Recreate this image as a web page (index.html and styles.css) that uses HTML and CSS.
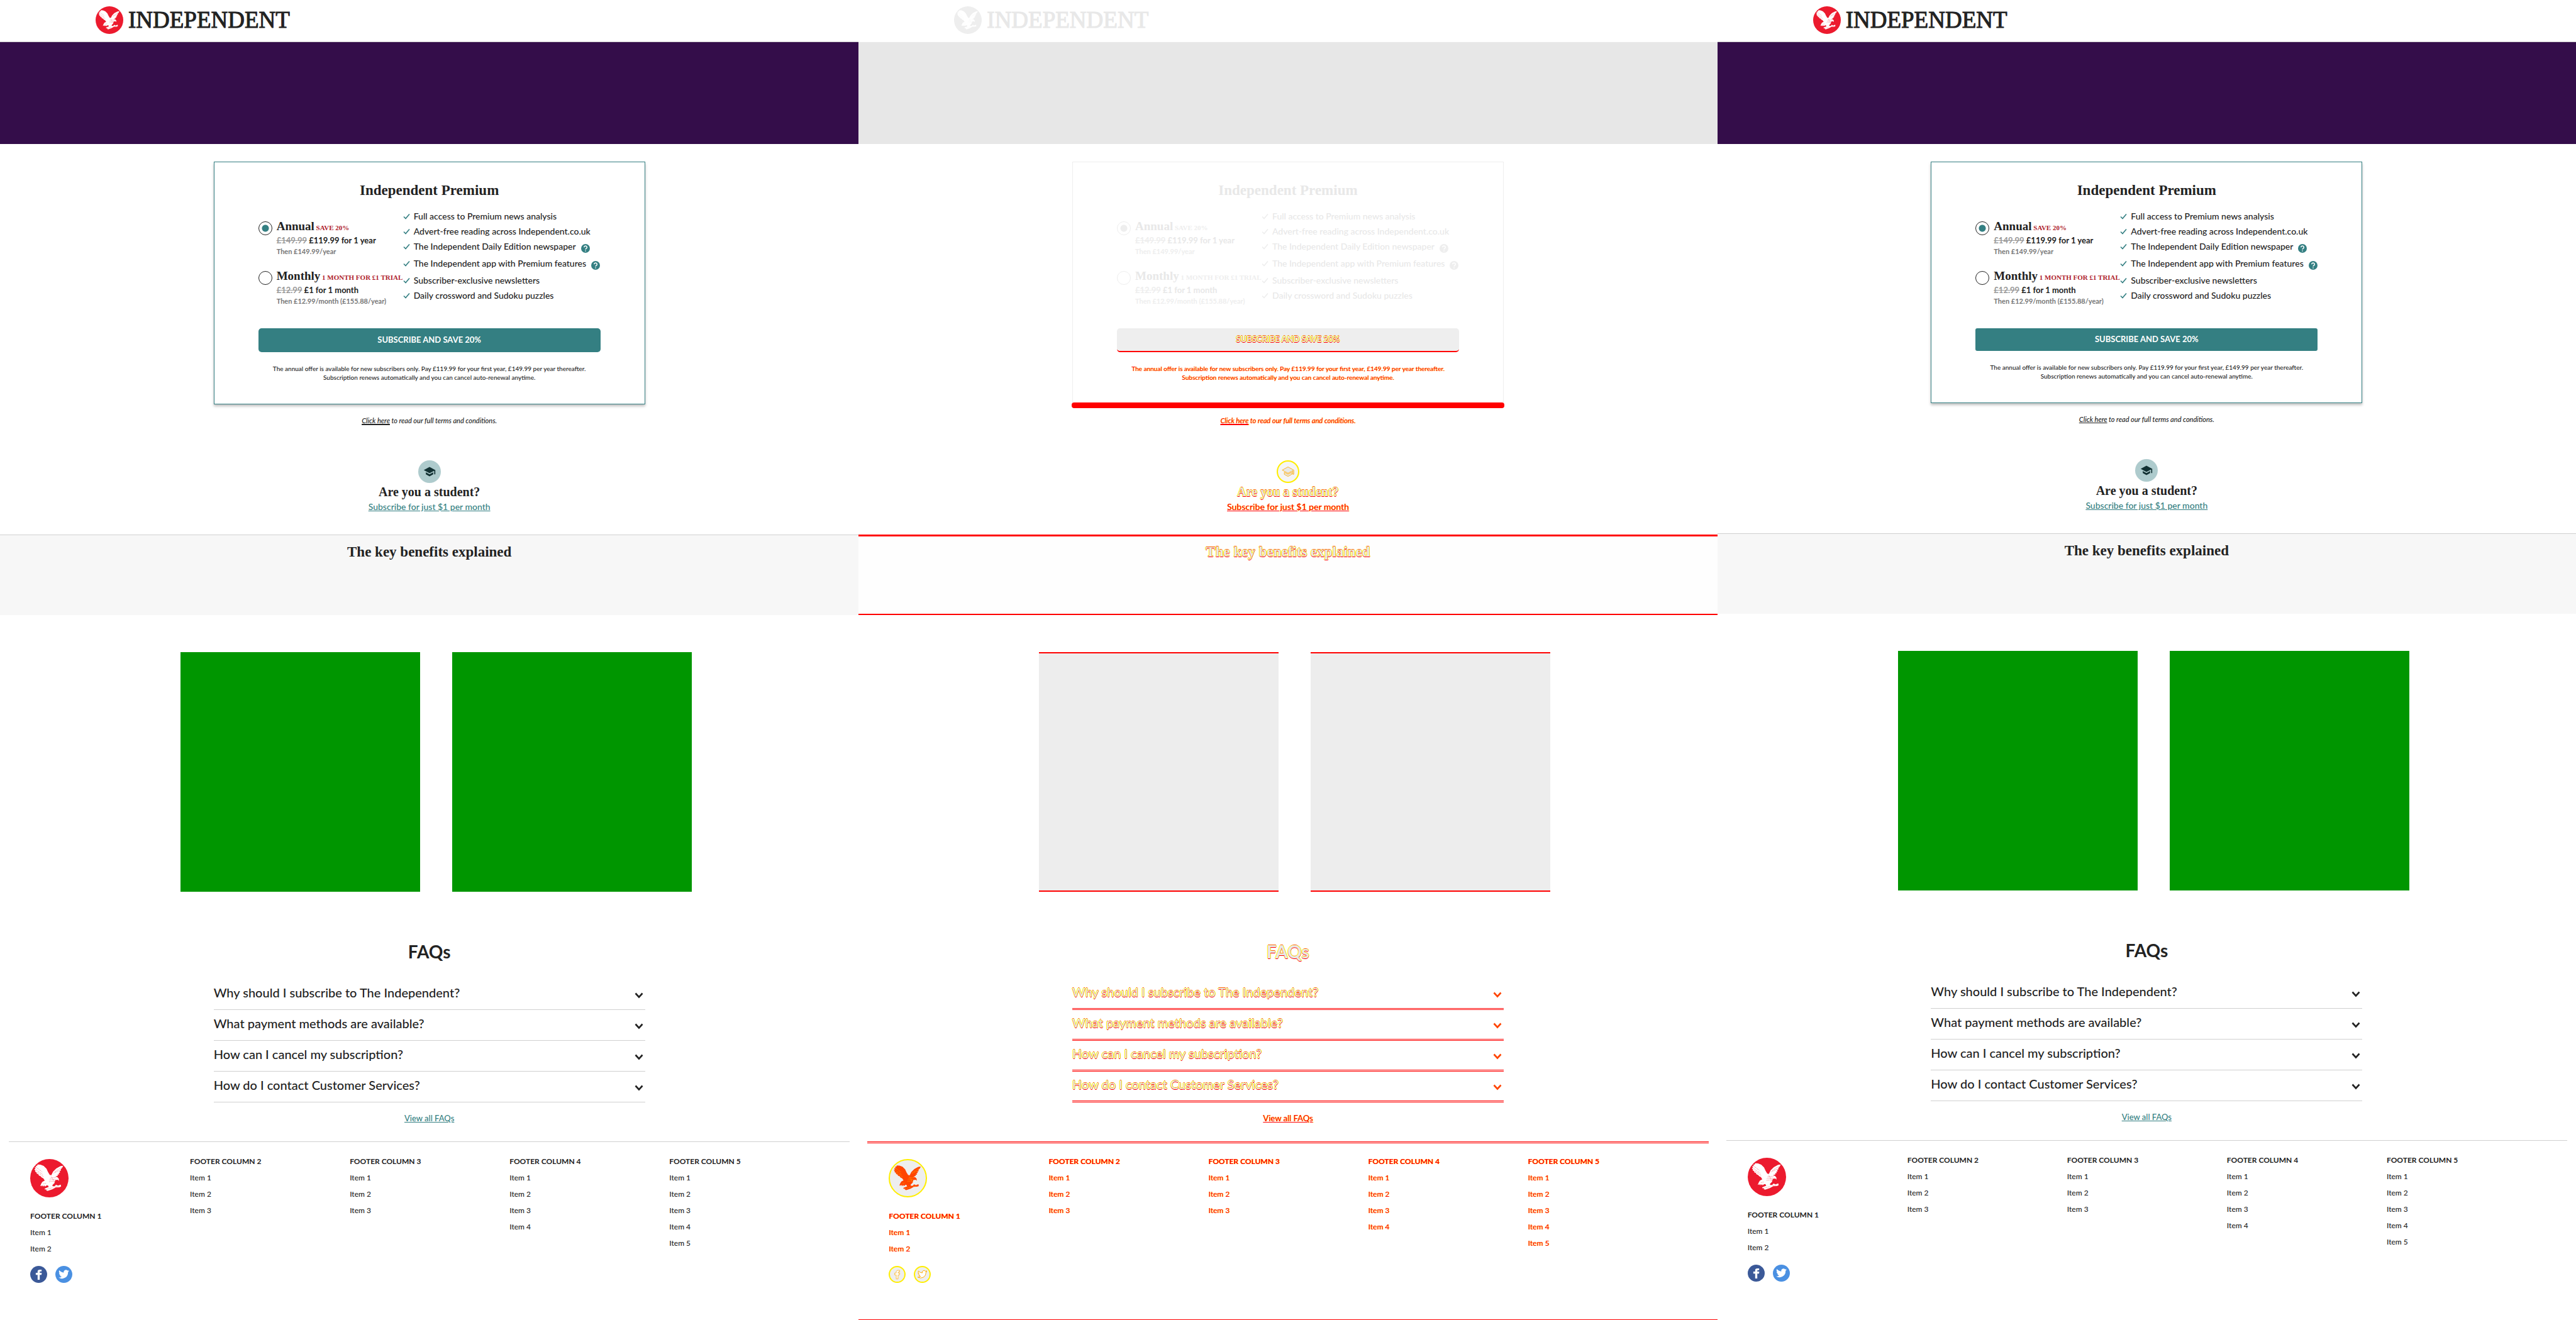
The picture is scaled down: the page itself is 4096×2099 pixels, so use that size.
FILE: index.html
```
<!DOCTYPE html>
<html lang="en">
<head>
<meta charset="utf-8">
<title>Independent Premium - visual comparison</title>
<link rel="stylesheet" href="styles.css">
</head>
<body>
<svg class="sprite" aria-hidden="true">
  <symbol id="eagle" viewBox="0 0 216 216">
    <path class="wing" d="M42 31l-4 8-7-1 3 9-9 0 5 9-7 2 7 8-3 4 9 6 1 6 9 4 3 7 10 4 5 7 10 5 8 12-13 7-6 9-7 16 9-4-1 6 8-7 1 8 8-7 3 7 8-7 8 0 4 9 7 0 2-5 6 8 9-2-3-12 12-12 4-16 14-2 7 6-1-12-8-9-11-3 15-6-3-5 10-2-4-6 9-5-4-5 9-6-3-5 9-9 6-12-15 2-24 13-18 18-10 20-9-2-10-16-8-18-16-16-18-7z"/>
    <path class="wing" d="M82 166l30-12 26-1 7-8 12 5 15-6 2 11-10 4-20 1-20 11-26 9-9-4 5-4-13-1z"/>
    <path class="lines" d="M34 47l34 26M32 60l40 28M38 74l38 26M176 48l-40 26M168 64l-38 16M112 108l32-4M108 118l34-4M106 128l30-4M74 140l18-4M118 98l20 34M96 170l30-8M140 158l22-4"/>
  </symbol>
  <symbol id="tick" viewBox="0 0 11 10"><path d="M1 5.5l3 3 6-7" fill="none" stroke="currentColor" stroke-width="1.6"/></symbol>
  <symbol id="help" viewBox="0 0 14 14"><circle cx="7" cy="7" r="7" fill="currentColor"/><path d="M4.7 5.3a2.3 2.2 0 1 1 3.5 1.9q-1.2.7-1.2 1.6M7 10.2v1.5" fill="none" stroke="#fff" stroke-width="1.5"/></symbol>
  <symbol id="cap" viewBox="0 0 24 24"><path d="M5 13.2v4L12 21l7-3.800v-4L12 17l-7-3.800zM12 3L1 9l11 6 9-4.900V17h2V9L12 3z"/></symbol>
  <symbol id="chevron" viewBox="0 0 14 10"><path d="M1.500 1.500L7 7.500l5.500-6" fill="none" stroke="currentColor" stroke-width="2.600"/></symbol>
  <symbol id="facebook" viewBox="0 0 32 32"><path d="M14 26V17h-3.500v-4H14v-2.500C14 8 15.600 7 18 7h3.500v3.500H19.500c-1 0-1.500.5-1.500 1.500v1h3.800l-.5 4H18v9z"/></symbol>
  <symbol id="twitter" viewBox="0 0 24 24"><path d="M19.500 7.200a6 6 0 0 1-1.700.5 3 3 0 0 0 1.300-1.700 6 6 0 0 1-1.900.7 3 3 0 0 0-5.200 2.800A8.600 8.600 0 0 1 5.700 6.300a3 3 0 0 0 .9 4.100 3 3 0 0 1-1.400-.4c0 1.500 1 2.800 2.400 3a3 3 0 0 1-1.300.1 3 3 0 0 0 2.800 2.100A6.100 6.100 0 0 1 4.600 16.500a8.600 8.600 0 0 0 13.300-7.700 6 6 0 0 0 1.600-1.600z"/></symbol>
</svg>

<div class="comparison" id="comparison"></div>

<template id="page">
  <header class="masthead">
    <a class="logo" href="#" aria-label="Independent home">
      <svg class="badge"><use href="#eagle"/></svg>
      <span class="wordmark">INDEPENDENT</span>
    </a>
  </header>
  <div class="hero"></div>
  <main>
    <form class="card">
      <h2 class="card-title">Independent Premium</h2>
      <div class="offer">
        <div class="plans">
          <label class="plan">
            <input class="radio" type="radio" name="plan" checked>
            <span class="plan-text">
              <span class="plan-name"><b>Annual</b> <span class="tag">SAVE 20%</span></span>
              <span class="price"><s>£149.99</s> £119.99 for 1 year</span>
              <span class="then">Then £149.99/year</span>
            </span>
          </label>
          <label class="plan">
            <input class="radio" type="radio" name="plan">
            <span class="plan-text">
              <span class="plan-name"><b>Monthly</b> <span class="tag">1 MONTH FOR £1 TRIAL</span></span>
              <span class="price"><s>£12.99</s> £1 for 1 month</span>
              <span class="then">Then £12.99/month (£155.88/year)</span>
            </span>
          </label>
        </div>
        <ul class="benefits">
          <li><svg class="tick"><use href="#tick"/></svg>Full access to Premium news analysis</li>
          <li><svg class="tick"><use href="#tick"/></svg>Advert-free reading across Independent.co.uk</li>
          <li class="with-help"><svg class="tick"><use href="#tick"/></svg>The Independent Daily Edition newspaper<svg class="help"><use href="#help"/></svg></li>
          <li class="with-help"><svg class="tick"><use href="#tick"/></svg>The Independent app with Premium features<svg class="help"><use href="#help"/></svg></li>
          <li><svg class="tick"><use href="#tick"/></svg>Subscriber-exclusive newsletters</li>
          <li><svg class="tick"><use href="#tick"/></svg>Daily crossword and Sudoku puzzles</li>
        </ul>
      </div>
      <button class="subscribe moved-text" type="button">SUBSCRIBE AND SAVE 20%</button>
      <p class="small-print moved-small">The annual offer is available for new subscribers only. Pay £119.99 for your first year, £149.99 per year thereafter.<br>Subscription renews automatically and you can cancel auto-renewal anytime.</p>
    </form>
    <p class="terms moved-small"><a href="#">Click here</a> to read our full terms and conditions.</p>
    <section class="student">
      <svg class="student-icon"><use href="#cap" x="8" y="8" width="20" height="20"/></svg>
      <h3 class="student-title moved-text">Are you a student?</h3>
      <a class="link moved-small" href="#">Subscribe for just $1 per month</a>
    </section>
    <section class="key-benefits">
      <h2 class="section-title moved-text">The key benefits explained</h2>
    </section>
    <div class="tiles"><div class="tile"></div><div class="tile"></div></div>
    <section class="faqs">
      <h2 class="faq-title moved-text">FAQs</h2>
      <details><summary><span class="moved-text">Why should I subscribe to The Independent?</span><svg class="chevron"><use href="#chevron"/></svg></summary></details>
      <details><summary><span class="moved-text">What payment methods are available?</span><svg class="chevron"><use href="#chevron"/></svg></summary></details>
      <details><summary><span class="moved-text">How can I cancel my subscription?</span><svg class="chevron"><use href="#chevron"/></svg></summary></details>
      <details><summary><span class="moved-text">How do I contact Customer Services?</span><svg class="chevron"><use href="#chevron"/></svg></summary></details>
      <a class="link all-faqs moved-small" href="#">View all FAQs</a>
    </section>
  </main>
  <footer class="footer moved-small">
    <div>
      <svg class="badge badge-large"><use href="#eagle"/></svg>
      <h4>FOOTER COLUMN 1</h4>
      <a href="#">Item 1</a><a href="#">Item 2</a>
      <div class="social">
        <a href="#" aria-label="Facebook"><svg class="facebook"><use href="#facebook"/></svg></a>
        <a href="#" aria-label="Twitter"><svg class="twitter"><use href="#twitter"/></svg></a>
      </div>
    </div>
    <div><h4>FOOTER COLUMN 2</h4><a href="#">Item 1</a><a href="#">Item 2</a><a href="#">Item 3</a></div>
    <div><h4>FOOTER COLUMN 3</h4><a href="#">Item 1</a><a href="#">Item 2</a><a href="#">Item 3</a></div>
    <div><h4>FOOTER COLUMN 4</h4><a href="#">Item 1</a><a href="#">Item 2</a><a href="#">Item 3</a><a href="#">Item 4</a></div>
    <div><h4>FOOTER COLUMN 5</h4><a href="#">Item 1</a><a href="#">Item 2</a><a href="#">Item 3</a><a href="#">Item 4</a><a href="#">Item 5</a></div>
  </footer>
</template>
<script src="script.js"></script>
</body>
</html>
```
FILE: script.js
```
// Stamps the page once per state: before, difference, after.
const template = document.getElementById('page');
const comparison = document.getElementById('comparison');
for (const state of ['before', 'diff', 'after']) {
  const panel = document.createElement('div');
  panel.className = 'panel ' + state;
  panel.append(template.content.cloneNode(true));
  panel.querySelectorAll('.radio').forEach((radio) => { radio.name = 'plan-' + state; });
  comparison.append(panel);
}
```
FILE: styles.css
```
* { box-sizing: border-box; }

body {
  margin: 0;
  font-family: Lato, "Noto Sans", sans-serif;
  font-size: 14px;
  font-weight: 500;
  background: #fff;
}

h2, h3, h4, p, ul { margin: 0; padding: 0; }
svg { display: block; flex: none; }
.sprite { width: 0; height: 0; position: absolute; }

.comparison {
  display: grid;
  grid-template-columns: repeat(3, minmax(0, 1fr));
  min-height: 100vh;
}

.panel {
  --ink: #222;
  --teal: #347f82;
  --red: #ec1a2e;
  --tag: #af1e2d;
  --old-price: #999;
  --then: #777;
  --rule: #d0d0d0;
  --hero: #340d4a;
  --button: #347f82;
  --button-text: #fff;
  --tile: #009600;
  --band: #f7f7f7;
  color: var(--ink);
}

/* masthead */
.masthead {
  height: 67px;
  padding: 10px 0 0 152px;
  border-bottom: 1px solid var(--rule);
}
.logo {
  display: inline-flex;
  align-items: center;
  gap: 8px;
  color: inherit;
  text-decoration: none;
}
.badge {
  width: 44px;
  height: 44px;
  border-radius: 50%;
  background: var(--red);
}
.wing { fill: var(--eagle, #fff); }
.lines { fill: none; stroke: var(--red); stroke-width: 2; stroke-dasharray: 3 3; }
.wordmark {
  font: 37px/44px "Liberation Serif", serif;
  -webkit-text-stroke: 1px currentColor;
}
.hero { height: 162px; background: var(--hero); }

/* offer card */
.card {
  max-width: 686px;
  margin: 28px auto 0;
  padding: 31px 70px 35px;
  border: 1px solid var(--teal);
  box-shadow: 0 3px 4px rgba(0, 0, 0, .25);
}
.card-title, .section-title {
  font: bold 23px/28px "Liberation Serif", serif;
  text-align: center;
}
.offer {
  display: grid;
  grid-template-columns: 230px 1fr;
  margin-top: 15px;
  white-space: nowrap;
}
.plans {
  display: grid;
  gap: 19px;
  padding-top: 16px;
}
.plan { display: flex; gap: 7px; }
.radio {
  appearance: none;
  flex: none;
  width: 22px;
  height: 22px;
  margin: 4px 0 0;
  border: 1px solid var(--ink);
  border-radius: 50%;
}
.radio:checked { background: radial-gradient(circle, var(--teal) 5px, transparent 6px); }
.plan-text { display: grid; grid-template-rows: 24px 20px 16px; }
.plan-name { font: bold 11px/28px "Liberation Serif", serif; }
.plan-name b { font-size: 19px; line-height: 20px; }
.tag { color: var(--tag); }
.price { font-size: 13px; font-weight: bold; line-height: 20px; }
.price s { color: var(--old-price); }
.then { font-size: 11px; font-weight: bold; line-height: 16px; color: var(--then); }

.benefits { list-style: none; }
.benefits li { display: flex; height: 24px; line-height: 24px; }
.benefits .with-help { height: 27px; }
.tick { width: 11px; height: 10px; margin: 7px 6px 0 0; color: var(--teal); }
.help { width: 14px; height: 14px; margin: 8px 0 0 8px; color: var(--teal); }

.subscribe {
  display: block;
  width: 100%;
  height: 38px;
  margin: 35px 0 19px;
  padding: 0 0 2px;
  border: 0;
  border-radius: 5px;
  background: var(--button);
  color: var(--button-text);
  font: bold 13px/20px Lato, sans-serif;
}
.small-print, .terms { font-size: 10px; line-height: 14px; text-align: center; white-space: nowrap; }
.terms { margin-top: 19px; font-size: 11px; font-style: italic; }
.terms a { color: inherit; text-decoration-thickness: 2px; }

/* student offer */
.student {
  display: flex;
  flex-direction: column;
  align-items: center;
  margin: 56px 0 34px;
}
.student-icon {
  width: 36px;
  height: 36px;
  border-radius: 50%;
  background: #aecbcd;
  fill: #123133;
}
.student-title { margin: 2px 0; font: bold 20px/24px "Liberation Serif", serif; }
.link { color: var(--teal); line-height: 20px; }

/* benefits band and tiles */
.key-benefits {
  height: 128px;
  padding-top: 13px;
  border-top: 1px solid var(--rule);
  background: var(--band);
}
.tiles {
  display: flex;
  justify-content: center;
  gap: 51px;
  margin: 59px 0 77px;
  padding-left: 22px;
}
.tile { width: 381px; aspect-ratio: 1; background: var(--tile); }

/* FAQs */
.faqs {
  display: flex;
  flex-direction: column;
  max-width: 686px;
  margin: 0 auto;
}
.faq-title { margin-bottom: 26px; font-size: 28px; line-height: 36px; text-align: center; }
.faqs summary {
  display: flex;
  justify-content: space-between;
  align-items: center;
  height: 49px;
  border-bottom: 1px solid var(--rule);
  font-size: 20px;
  line-height: 42px;
}
.faqs summary span { padding-bottom: 6px; }
.chevron { width: 14px; height: 10px; margin: 4px 3px 0 0; }
.all-faqs { align-self: center; margin: 15px 0 27px; font-size: 13px; }

/* footer */
.footer {
  display: grid;
  grid-template-columns: repeat(5, 1fr);
  margin: 0 14px;
  padding: 18px 33px 0 34px;
  border-top: 1px solid var(--rule);
  font-size: 12px;
  line-height: 26px;
}
.footer h4 { font-size: inherit; }
.footer a { display: block; color: inherit; text-decoration: none; }
.badge-large { width: 61px; height: 61px; margin: 9px 0 17px; }
.social { display: flex; gap: 13px; margin-top: 14px; }
.social svg { width: 27px; height: 27px; border-radius: 50%; fill: #fff; }
.facebook { background: #3b5998; }
.twitter { background: #4a90e2; }

/* after: slimmer button, lighter underline */
.after .subscribe { height: 36px; border-radius: 3px; }
.after .terms a { text-decoration-thickness: 1px; }

/* diff: unchanged pixels are faded, changed ones are red with yellow edges */
.diff {
  --ink: #e8e8e8;
  --teal: #eee;
  --red: #eee;
  --tag: #eee;
  --old-price: #eee;
  --then: #eee;
  --rule: #fdfdfd;
  --hero: #e7e7e7;
  --button: #eee;
  --button-text: #e8e8e8;
  --tile: #ededed;
  --band: #fefefe;
  border-bottom: 1px solid #f00;
}
.diff .moved-text { text-shadow: 0 1px #f00, 1px 0 #ff0, -1px 0 #ff0, 0 -1px #f60; }
.diff .moved-small, .diff .moved-small a { color: #f00; text-shadow: 1px 0 #ff0c; }
.diff .radio { border-color: #eee; }
.diff .card { position: relative; box-shadow: none; }
.diff .card::after {
  content: "";
  position: absolute;
  left: -2px;
  right: -2px;
  bottom: -7px;
  height: 9px;
  border-radius: 4px;
  background: #f00;
}
.diff .subscribe { border-bottom: 2px solid #f00; }
.diff .student-icon { background: #f5f5f5; border: 2px solid #fe0; fill: #e8e8e8; stroke: #fa0; }
.diff .student-icon use { transform: translate(-2px, -2px); }
.diff .key-benefits { border-top: 3px solid #f00; border-bottom: 2px solid #f00; padding-top: 11px; }
.diff .tile { border: solid #f00; border-width: 2px 0; }
.diff .faqs summary { border-bottom: 3px double #f00; }
.diff .chevron { color: #f40; }
.diff .footer { border-top: 3px double #f00; padding-top: 16px; }
.diff .badge-large { --eagle: #f40; --red: #fe0; border: 2px solid #fe0; background: #eee; }
.diff .social svg { background: #eee; border: 2px solid #fe0; stroke: #fa0; }
```
